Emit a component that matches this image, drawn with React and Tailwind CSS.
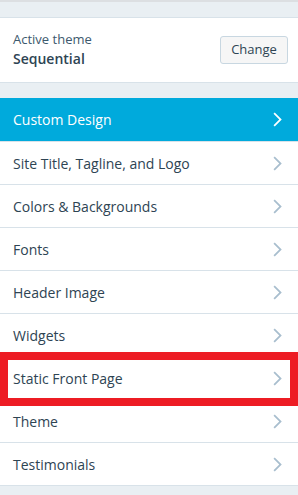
import React from 'react';

const items = [
  'Site Title, Tagline, and Logo',
  'Colors & Backgrounds',
  'Fonts',
  'Header Image',
  'Widgets',
  'Static Front Page',
  'Theme',
  'Testimonials',
];

const Chevron = ({ className }) => (
  <svg width="21" height="21" viewBox="0 0 24 24" className={className} fill="currentColor">
    <path d="M10 20l8-8-8-8-1.414 1.414L15.172 12l-6.586 6.586z" />
  </svg>
);

const App = () => {
  return (
    <div
      className="relative w-[298px] h-[495px] overflow-hidden bg-[#e9eff3] text-[#2e4453]"
      style={{ fontFamily: '"Open Sans", "Noto Sans", sans-serif' }}
    >
      <div className="h-[2px] bg-[#dcdfe2]" />
      <div className="h-[15px]" />

      {/* active theme card */}
      <div className="flex items-center justify-between h-[66px] bg-white border-y border-[#d8e2e9] pl-[13px] pr-[10px]">
        <div className="flex flex-col">
          <span className="text-[13px] leading-[18px] text-[#3d596d]">Active theme</span>
          <span className="text-[14px] leading-[22px] font-semibold">Sequential</span>
        </div>
        <button className="h-[28px] w-[68px] rounded-[3px] border border-[#c8d7e1] bg-[#f6f6f6] text-[13px] text-[#2e4453]">
          Change
        </button>
      </div>

      <div className="h-[15px]" />

      <div className="flex flex-col">
        <div className="flex items-center justify-between h-[43px] bg-[#00aadc] pl-[13px] pr-[11px] text-white">
          <span className="text-[14px]">Custom Design</span>
          <Chevron className="text-white" />
        </div>
        {items.map((label) => (
          <div
            key={label}
            className="flex items-center justify-between h-[43px] bg-white border-t border-[#d8e2e9] first:border-[#f3f6f8] pl-[13px] pr-[11px]"
          >
            <span className="text-[14px]">{label}</span>
            <Chevron className="text-[#a8bece]" />
          </div>
        ))}
        <div className="h-px bg-[#d8e2e9]" />
      </div>

      {/* highlight box */}
      <div className="absolute left-0 top-[352px] w-[298px] h-[54px] border-[8px] border-[#ed1c24]" />
    </div>
  );
};

export default App;
